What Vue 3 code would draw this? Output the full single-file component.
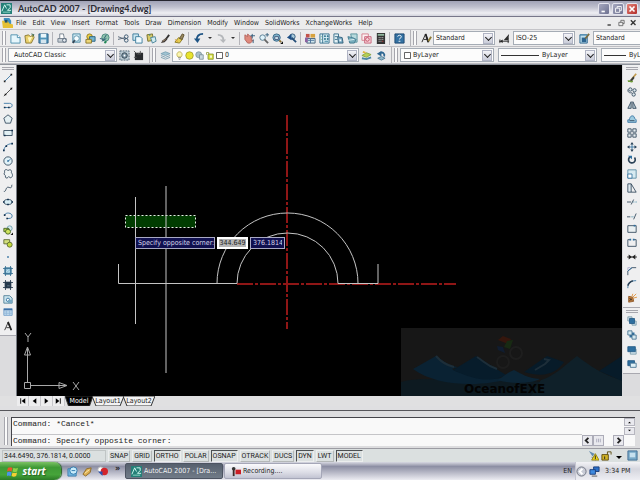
<script setup>
import { ref } from 'vue'

const blue = '#2f6f9f'
const ink = '#2b4257'

const glyphs = {
  fresh: '<path d="M1 2h7l3 3v6H1z" fill="#e6f6fc" stroke="#4d8fae"/><path d="M8 2v3h3" fill="#fff" stroke="#4d8fae"/>',
  open: '<path d="M1 3l4-1 2 2 3-2 1 3-3 6H2z" fill="#e8cf6a" stroke="#8a7a34"/><path d="M4 5l5-1-3 6z" fill="#fff7c4"/><path d="M8 1l3 1-2 2" fill="none" stroke="#3b6b54"/>',
  save: '<path d="M1 1h10v10H1z" fill="#4f94b9" stroke="#2c5f85"/><path d="M3 1h6v4H3z" fill="#e9f6fb"/><path d="M3 7h6v4H3z" fill="#d4e5ee"/>',
  print: '<path d="M3 6V1h4l1 5" fill="#fff" stroke="#74808c"/><path d="M1 6h9v4H1z" fill="#c8d0d7" stroke="#74808c"/><circle cx="8" cy="8" r="2" fill="#e4eaf0" stroke="#56677a"/>',
  preview: '<path d="M2 1h8v9H2z" fill="#d5eef5" stroke="#4685a2"/><circle cx="6" cy="6" r="3" fill="#f6fdff" stroke="#5f93ad"/><path d="M4 8l-2 3" stroke="#345" stroke-width="2"/>',
  publish: '<circle cx="5" cy="4" r="3" fill="#e9cd47" stroke="#957b1c"/><path d="M5 4h6v5H5z" fill="#75b5d0" stroke="#27607f"/><path d="M1 7h6v4H1z" fill="#ecd678" stroke="#8b772a"/>',
  globe: '<circle cx="7" cy="5" r="4" fill="#8fc4ae" stroke="#4d8a80"/><path d="M1 6l4 1 3-5M3 9l5-3" stroke="#28596f" fill="none"/><path d="M6 11l2-2" stroke="#285" stroke-width="2"/>',
  cut: '<path d="M0 4l8 3M0 7l8-2" stroke="#567"/><circle cx="9" cy="4" r="2" fill="none" stroke="#37546d"/><circle cx="9" cy="8" r="2" fill="none" stroke="#37546d"/>',
  copy: '<path d="M1 1h6v7H1z" fill="#c9e6f0" stroke="#3c7d9d"/><path d="M4 4h5l2 2v5H4z" fill="#f0fbff" stroke="#3c7d9d"/>',
  paste: '<path d="M1 2l6-1 1 7-6 1z" fill="#d8cb68" stroke="#77702c"/><path d="M5 5l5-1 1 5-4 2z" fill="#cfebef" stroke="#498299"/><circle cx="4" cy="2" r="1" fill="#587"/>',
  brush: '<path d="M10 2L7 6" stroke="#333" stroke-width="2"/><path d="M7 5L3 8l-2 3 4-1 3-3z" fill="#3c3533"/><path d="M3 9l3-2" stroke="#b09a77"/>',
  block: '<path d="M1 10l4-5 4 2-3 4z" fill="#e5cd53" stroke="#8d7b24"/><path d="M6 6l3-5 2 1-2 5z" fill="#9b8a61" stroke="#5d502e"/><path d="M1 7l3 2" stroke="#d99b30"/>',
  undo: '<path d="M11 1C6 1 4 4 4 8" fill="none" stroke="#1e5484" stroke-width="2"/><path d="M1 6h7l-3 5z" fill="#1e5484"/>',
  redo: '<path d="M2 2c4 0 6 2 6 6" fill="none" stroke="#b5b8bb" stroke-width="2"/><path d="M4 7h7l-3 4z" fill="#b5b8bb"/>',
  pan: '<path d="M1 2l3 2V1l3 3 1-1v5l2 0-3 3H4L1 7z" fill="#df8a7d" stroke="#b3655c"/><path d="M9 1v5M7 3h5M10 7v4" stroke="#315c7c"/>',
  zoomrt: '<circle cx="5" cy="5" r="3" fill="#e0f3fa" stroke="#567b91"/><path d="M7 7l4 4" stroke="#666" stroke-width="2"/><path d="M8 2h4M10 0v4" stroke="#37627f"/>',
  zoomwin: '<circle cx="5" cy="5" r="4" fill="#7fb2cb" stroke="#386685"/><path d="M3 4h4v3H3z" fill="#d9eff7" stroke="#457"/><path d="M8 8l2 2" stroke="#8b7033" stroke-width="2"/><path d="M9 12h3V9z" fill="#111"/>',
  zoomprev: '<circle cx="7" cy="4" r="3" fill="#a9cbdc" stroke="#30597a"/><path d="M6 5l5 5" stroke="#244d77" stroke-width="2"/><path d="M1 5l5-4v7z" fill="#1e4f86"/>',
  props: '<path d="M1 1h4v4H1z" fill="#c25249"/><path d="M6 1h5v4H6z" fill="#d7a23d"/><path d="M2 6h9v5H2z" fill="#d2e8ef" stroke="#45617a"/><path d="M3 8h7M6 6v5" stroke="#4c729a"/><path d="M0 5h3v5H0z" fill="#8b61a1"/>',
  design: '<path d="M1 1h10v10H1z" fill="#dcf0f6" stroke="#36718f"/><path d="M4 1v10" stroke="#36718f"/><path d="M6 3h1v1H6zM9 3h1v1H9zM6 6h1v1H6zM9 6h1v1H9zM6 9h4" stroke="#2f7d99"/><path d="M2 4h1M2 7h1" stroke="#7a7"/>',
  palette: '<path d="M1 1h5v10H1z" fill="#e2f1f5" stroke="#386d8a"/><path d="M2 4h3M2 7h3" stroke="#386d8a"/><path d="M5 4l5 1 1 6H6z" fill="#7bacc6" stroke="#31607c"/><path d="M7 7h2v2H7z" fill="#fff"/>',
  sheets: '<path d="M4 1h7v9H6z" fill="#b7dadd" stroke="#57929c"/><path d="M1 4l5 1 4 2-2 4H3z" fill="#78aebd" stroke="#437b8f"/><path d="M1 8l7-1" stroke="#e4f4f4"/>',
  markup: '<path d="M1 1h7v7H1z" fill="#fbeff0" stroke="#d4808f"/><path d="M4 4h7v7H4z" fill="#f6d4da" stroke="#c7627a"/><circle cx="7" cy="7" r="2" fill="none" stroke="#c44a62"/>',
  calc: '<path d="M2 0h9v12H2z" fill="#333"/><path d="M3 1h7v2H3z" fill="#8eb59c"/><path d="M4 5h1M6 5h1M8 5h1M4 7h1M6 7h1M8 7h1M4 9h1M6 9h1" stroke="#ddd"/><path d="M8 9h1" stroke="#e44"/>',
  help: '<path d="M1 1h10v10H1z" fill="#3472a3" stroke="#1c4770"/><path d="M4 4c0-2 4-2 4 0 0 2-2 1-2 3" fill="none" stroke="#fff" stroke-width="1"/><path d="M5 9h2" stroke="#fff"/>',
  textstyle: '<path d="M1 10L5 1l3 9M3 7h4" fill="none" stroke="#222" stroke-width="1"/><path d="M5 1l3 9" stroke="#222" stroke-width="2"/><path d="M11 4L8 9" stroke="#8d7a35" stroke-width="2"/>',
  dimstyle: '<path d="M0 9h11M1 7v4M10 5v6" stroke="#333"/><path d="M11 1L5 8l5 0z" fill="#2c2c2c"/><path d="M1 9l3-2v4z" fill="#222"/>',
  tablestyle: '<path d="M1 2h8v9H1z" fill="#bfe0ee" stroke="#2b648c"/><path d="M3 5h5v5H3z" fill="#2d6590"/><path d="M11 1L7 6" stroke="#7c6e42" stroke-width="2"/><path d="M1 2h8" stroke="#4b8db5"/>',
  gear: '<path d="M1 1h10v10H1z" fill="#bcccd5" stroke="#4f6473" stroke-dasharray="2 1"/><circle cx="6" cy="6" r="3" fill="#7f98a8" stroke="#30414e"/><circle cx="6" cy="6" r="1" fill="#fff"/>',
  workspace: '<path d="M2 3h9v8H2z" fill="#292b2e"/><path d="M1 1l3 3M8 1v4M1 8h3" stroke="#555"/><path d="M4 5l2-2 2 2" fill="#555"/>',
  layers: '<path d="M1 4l5-2 5 2-5 2z" fill="#9fc3d2" stroke="#7da3b6"/><path d="M1 6l5 2 5-2M1 8l5 2 5-2" fill="none" stroke="#7b9fb1"/>',
  bulb: '<path d="M4 8C1 5 3 1 6 1s5 4 2 7z" fill="#fbf6ae" stroke="#b2a446"/><path d="M4 9h4M5 11h2" stroke="#777"/>',
  sun: '<circle cx="6" cy="6" r="5" fill="#e8e32e" stroke="#9c982a"/>',
  vpfreeze: '<circle cx="5" cy="5" r="4" fill="#a9bfc9" stroke="#79909b"/><path d="M6 5h5v6H6z" fill="#cbd9df" stroke="#718893"/>',
  lock: '<path d="M2 5V2h3v3" fill="none" stroke="#8b9333"/><path d="M4 4h7v7H4z" fill="#d9e33d" stroke="#7f8829"/><path d="M7 6h2v3H7z" fill="#fff"/>',
  swatch: '<path d="M2 2h8v8H2z" fill="#fff" stroke="#333"/>',
  laymake: '<path d="M1 6l5-3 5 2-5 3z" fill="#b6cf52" stroke="#8aa447"/><path d="M1 9l5 1 5-2" fill="none" stroke="#4b86a3" stroke-width="2"/><path d="M2 2l3 1" stroke="#e3b63a" stroke-width="2"/>',
  layprev: '<path d="M5 4c3-3 6 0 5 3" fill="none" stroke="#2f6792" stroke-width="2"/><path d="M2 4l5-3v6z" fill="#2f6792"/><path d="M3 9l4-2 4 2-4 2z" fill="#8fb6c9" stroke="#527f98"/>',

  line: `<path d="M2 10L10 2" stroke="${blue}"/><path d="M1 10h2M9 2h2" stroke="#222" stroke-width="2"/>`,
  xline: '<path d="M1 11L11 1" stroke="#333"/><path d="M2 9h2M9 2h2" stroke="#111" stroke-width="2"/>',
  pline: `<path d="M1 4h7c4 0 4 5 0 5H2" fill="none" stroke="${blue}"/><path d="M1 9h2M6 9h2" stroke="#14324f" stroke-width="2"/>`,
  polygon: `<path d="M6 1l5 4-2 6H3L1 5z" fill="#e5f0f3" stroke="${ink}"/>`,
  rect: `<path d="M1 3h10v6H1z" fill="#e2f0f4" stroke="${ink}"/><path d="M1 9h2M10 3h2" stroke="#14324f" stroke-width="2"/>`,
  arc: `<path d="M1 11C1 6 5 2 11 2" fill="none" stroke="${blue}"/><path d="M0 10h2M3 5h2M10 2h2" stroke="#14324f" stroke-width="2"/>`,
  circle: `<circle cx="6" cy="6" r="5" fill="#e1f2f8" stroke="${ink}"/><path d="M6 6l3-2" stroke="${blue}"/><path d="M5 6h2" stroke="${blue}" stroke-width="2"/>`,
  cloud: `<path d="M2 4c-1-4 3-4 4-2 2-2 5-1 4 2 1 2 2 3 1 5-1 2-3 2-4 0-2 3-5 2-4-1-2-1-2-3-1-4z" fill="#eff3f4" stroke="${ink}"/>`,
  spline: `<path d="M1 10c3 1 2-5 5-5 2 0 3 2 4 0 1-1 0-3 1-3" fill="none" stroke="${ink}"/>`,
  ellipse: `<ellipse cx="6" cy="6" rx="5" ry="3" fill="#d8edf5" stroke="${ink}"/><path d="M0 6h2M10 6h2M5 3h2M5 9h2" stroke="#14324f" stroke-width="2"/>`,
  earc: `<path d="M2 5c1-4 9-3 9 1 0 3-3 3-6 3" fill="none" stroke="${blue}"/><path d="M4 9h2M1 5h2" stroke="#14324f" stroke-width="2"/>`,
  insert: '<circle cx="8" cy="4" r="3" fill="#d9edf2" stroke="#6b9aa8"/><path d="M1 4h6v4H1z" fill="#b8d44a" stroke="#3f5a20"/><circle cx="6" cy="8" r="3" fill="#cfe45e" stroke="#3f5a20"/><path d="M9 12h3V9z" fill="#111"/>',
  makeblock: '<path d="M1 2h7v5H1z" fill="#d2df7c" stroke="#56612f"/><circle cx="8" cy="8" r="3" fill="#c3da3d" stroke="#56612f"/>',
  point: `<path d="M5 6h2" stroke="${blue}" stroke-width="2"/>`,
  hatch: '<path d="M2 2h8v8H2z" fill="#8fc1d8" stroke="#4f87a5"/><path d="M0 3h12M0 9h12M3 0v12M9 0v12" stroke="#386f91"/><path d="M4 7l3-3M6 8l2-2" stroke="#d4ebf4"/>',
  gradient: '<path d="M2 2h8v8H2z" fill="#25394c"/><path d="M0 3h12M0 9h12M3 0v12M9 0v12" stroke="#25394c"/><path d="M5 7h3" stroke="#6a8092"/>',
  region: '<path d="M1 2h7l3 3v6H1z" fill="#c9e3ed" stroke="#497991"/><circle cx="6" cy="7" r="2" fill="#fff" stroke="#2f6f9f"/><path d="M6 7h5v4H6z" fill="#76a8c2"/>',
  table: '<path d="M1 2h10v8H1z" fill="#cfe5f3" stroke="#6d9bc8"/><path d="M1 3h10" stroke="#3d6fa5" stroke-width="2"/><path d="M4 4v6M8 4v6M1 6h10M1 8h10" stroke="#8fb6d8"/>',
  mtext: '<path d="M2 11L6 2l4 9M4 8h4" fill="none" stroke="#222" stroke-width="1"/><path d="M6 1l4 10" stroke="#222" stroke-width="2"/>',

  erase: '<path d="M11 1L6 7" stroke="#c29a4c" stroke-width="2"/><path d="M8 4L3 9l3 1 3-4z" fill="#3d3d38"/><path d="M1 10c2-1 3 1 6 0" fill="none" stroke="#6d9a37" stroke-width="2"/>',
  copyobj: `<circle cx="4" cy="3" r="2" fill="#dde8ed" stroke="${ink}"/><circle cx="9" cy="4" r="2" fill="#dde8ed" stroke="${ink}"/><circle cx="8" cy="9" r="2" fill="#dde8ed" stroke="${ink}"/><path d="M1 3c0 4 2 4 5 4" fill="none" stroke="${ink}"/>`,
  mirror: `<path d="M5 2v8H1zM7 2v8h4z" fill="#b5c6d0" stroke="${ink}"/>`,
  offset: `<path d="M1 10V7h2c0-6 6-6 6-2l2 2v3z" fill="#9fcbe0" stroke="${blue}"/><path d="M3 8h6" stroke="${ink}"/>`,
  array: `<path d="M1 1h4v4H1zM7 1h4v4H7zM1 7h4v4H1zM7 7h4v4H7z" fill="#e6edf0" stroke="${ink}"/>`,
  move: `<path d="M6 2v8M2 6h8" stroke="${blue}" stroke-width="1"/><path d="M6 0l2 3H4zM6 12l2-3H4zM0 6l3-2v4zM12 6L9 4v4z" fill="${ink}"/>`,
  rotate: `<path d="M4 2a4 4 0 1 0 5 1" fill="none" stroke="${ink}" stroke-width="2"/><path d="M1 1h5v4z" fill="${blue}"/>`,
  scale: `<path d="M1 1h10v10H1z" fill="#d7eaf1" stroke="#52869f"/><path d="M1 6h5v5H1z" fill="#fff" stroke="${blue}"/>`,
  stretch: `<path d="M1 1h4v10H1z" fill="#dfeaf0" stroke="${ink}"/><path d="M5 1l6 10H5" fill="none" stroke="${ink}"/>`,
  trim: `<path d="M0 6h5" stroke="${ink}"/><path d="M7 6h5" stroke="#6fa5bb" stroke-dasharray="2 1"/><path d="M5 9l3-6" stroke="${ink}"/>`,
  extend: `<path d="M0 7h4" stroke="${ink}"/><path d="M5 7h3" stroke="#6fa5bb"/><path d="M8 10l3-7" stroke="${ink}"/>`,
  breakpt: `<path d="M1 2h10v8H1z" fill="#eaf0f2" stroke="${ink}"/><path d="M8 2h2" stroke="${blue}" stroke-width="2"/>`,
  breaks: `<path d="M4 2H1v8h10V2H8" fill="none" stroke="${ink}"/><path d="M3 2h2M7 2h2" stroke="${blue}" stroke-width="2"/>`,
  join: '<path d="M0 6h12" stroke="#222"/><path d="M2 3l4 3-4 3zM10 3L6 6l4 3z" fill="#222"/>',
  chamfer: `<path d="M1 11V6l5-4h5" fill="none" stroke="${ink}"/><path d="M1 6l5-4" stroke="${blue}"/><path d="M1 2h3M1 2v3" stroke="#aac"/>`,
  fillet: `<path d="M1 11C1 5 4 2 11 2" fill="none" stroke="${blue}" stroke-width="1"/><path d="M1 8C2 4 4 3 7 2" fill="none" stroke="${ink}" stroke-width="2"/>`,
  explode: '<path d="M2 4l5 1 1 5-6 1z" fill="#c7803c" stroke="#8c5525"/><path d="M7 5l4-4M8 6l4-1M6 4l1-3" stroke="#e08b2d"/><path d="M3 6l3 3M3 9l3-2" stroke="#2d2a29"/>',
  front: `<path d="M1 1h5v5H1zM6 6h5v5H6z" fill="#cbdde6" stroke="#7c9baa"/><path d="M3 3h6v6H3z" fill="${blue}" stroke="#245a85"/>`,
  back: `<path d="M3 3h6v6H3z" fill="${blue}"/><path d="M1 1h5v5H1zM6 6h5v5H6z" fill="#d5e8ef" stroke="#416e8d"/>`,
  above: `<path d="M4 5h7v6H4z" fill="#cfe1ea" stroke="#7c9baa"/><path d="M1 2h9v6H1z" fill="${blue}" stroke="#245a85"/>`,
  under: `<path d="M1 2h8v6H1z" fill="${blue}" stroke="#245a85"/><path d="M4 5h7v5H4z" fill="#dff1f7" stroke="#416e8d"/>`,

  acad: '<path d="M0 0h12v12H0z" fill="#257f78"/><path d="M1 9l3-7 2 4M6 2h4v3L7 8h4" fill="none" stroke="#d8fff6"/><path d="M2 10h8" stroke="#8fd8c8"/>',
  dwg: '<path d="M2 0h6l2 3v6H2z" fill="#3f8fc0"/><path d="M0 3h6l2 3 4 1v4H1z" fill="#e6c034"/><path d="M3 2h3v3H3z" fill="#1e506f"/>',
  browser: '<path d="M1 3h9v8H1z" fill="#6fb3dc" stroke="#3f7fae"/><circle cx="7" cy="5" r="4" fill="#c9ecfb" stroke="#2d78ad"/><path d="M5 5h4" stroke="#2d78ad"/>',
  media: '<path d="M1 9l4-6 5-1-1 5-5 4z" fill="#dcae52" stroke="#8c6a2c"/><path d="M3 8l5-4" stroke="#fff0ba"/>',
  player: '<circle cx="4" cy="4" r="3" fill="#fff" stroke="#bbb"/><circle cx="8" cy="6" r="4" fill="#d3242b"/><path d="M1 6h5v5z" fill="#2b50ad"/>',
  record: '<circle cx="4" cy="3" r="2" fill="#333"/><path d="M3 4h2v7H3z" fill="#3b2a26"/><path d="M6 4h6v5H6z" fill="#cb1d24"/>',
  comm: '<path d="M1 1l6 3-2 3z" fill="#638bb0"/><path d="M4 8l4 3" stroke="#456"/><path d="M8 4l4 7H4z" fill="#f3d91d" stroke="#917f12"/><path d="M8 6v4" stroke="#222"/>',
  unlock: '<path d="M1 5h7v6H1z" fill="#d3b526" stroke="#5e4f11"/><path d="M7 5V2h4v3" fill="none" stroke="#5e4f11"/><path d="M4 7v3" stroke="#222"/>',
  screen: '<path d="M1 1h10v10H1z" fill="#78a9c7" stroke="#3f6f94"/><path d="M3 3h6v5H3z" fill="#c6e1ef"/>',
  net: '<path d="M5 1h6v5H5z" fill="#2c6fc6" stroke="#1c3f7c"/><path d="M1 4h6v5H1z" fill="#3f8be0" stroke="#1c3f7c"/><path d="M3 11h6" stroke="#555"/>'
}

const menus = ['File', 'Edit', 'View', 'Insert', 'Format', 'Tools', 'Draw', 'Dimension', 'Modify', 'Window', 'SolidWorks', 'XchangeWorks', 'Help']

const standardBar = [
  'fresh', 'open', 'save', '|', 'print', 'preview', 'publish', 'globe', '|',
  'cut', 'copy', 'paste', 'brush', 'block', '|', 'undo', 'v', 'redo', 'v', '|',
  'pan', 'zoomrt', 'zoomwin', 'zoomprev', '|',
  'props', 'design', 'palette', 'sheets', 'markup', 'calc', '|', 'help'
]
const layerState = ['bulb', 'sun', 'vpfreeze', 'lock', 'swatch']
const drawBar = ['line', 'xline', 'pline', 'polygon', 'rect', 'arc', 'circle', 'cloud', 'spline', 'ellipse', 'earc', 'insert', 'makeblock', 'point', 'hatch', 'gradient', 'region', 'table', 'mtext']
const modifyBar = ['erase', 'copyobj', 'mirror', 'offset', 'array', 'move', 'rotate', 'scale', 'stretch', 'trim', 'extend', 'breakpt', 'breaks', 'join', 'chamfer', 'fillet', 'explode']
const orderBar = ['front', 'back', 'above', 'under']

const tabs = ['Model', 'Layout1', 'Layout2']
const activeTab = ref('Model')

const modes = ref([
  { name: 'SNAP', on: false }, { name: 'GRID', on: false }, { name: 'ORTHO', on: true },
  { name: 'POLAR', on: false }, { name: 'OSNAP', on: true }, { name: 'OTRACK', on: false },
  { name: 'DUCS', on: false }, { name: 'DYN', on: true }, { name: 'LWT', on: false }, { name: 'MODEL', on: true }
])

const cornerX = ref('344.649')
const cornerY = ref('376.1814')
const command = ref('Command: Specify opposite corner:')
</script>

<template>
  <div class="desktop">
    <header class="titlebar">
      <svg class="icon" viewBox="0 0 12 12" v-html="glyphs.acad"></svg>
      <h1>AutoCAD 2007 - [Drawing4.dwg]</h1>
      <div class="winbtns">
        <button aria-label="Minimize"><svg viewBox="0 0 12 12"><path d="M3 9h4" stroke="#fff" stroke-width="2" /></svg></button>
        <button aria-label="Restore"><svg viewBox="0 0 12 12"><path d="M5 5V3h5v5H8M3 5h5v5H3z" fill="none" stroke="#fff" /></svg></button>
        <button class="close" aria-label="Close"><svg viewBox="0 0 12 12"><path d="M3 3l6 6M9 3l-6 6" stroke="#fff" stroke-width="2" /></svg></button>
      </div>
    </header>

    <nav class="menubar">
      <svg class="icon" viewBox="0 0 12 12" v-html="glyphs.dwg"></svg>
      <button v-for="m in menus" :key="m">{{ m }}</button>
      <div class="docbtns">
        <button aria-label="Minimize drawing"><svg viewBox="0 0 12 12"><path d="M3 9h5" stroke="#333" stroke-width="2" /></svg></button>
        <button aria-label="Restore drawing"><svg viewBox="0 0 12 12"><path d="M5 5V2h5v5H8M2 5h6v5H2z" fill="none" stroke="#444" /></svg></button>
        <button aria-label="Close drawing"><svg viewBox="0 0 12 12"><path d="M2 2l7 7M9 2L2 9" stroke="#333" stroke-width="2" /></svg></button>
      </div>
    </nav>

    <div class="bars">
      <div class="bar">
        <i class="grip"></i>
        <template v-for="(t, i) in standardBar" :key="i">
          <i v-if="t === '|'" class="sep"></i>
          <button v-else-if="t === 'v'" class="more" aria-label="More"><svg viewBox="0 0 9 12"><path d="M3 5h4L5 7z" fill="#333" /></svg></button>
          <button v-else class="tool" :aria-label="t"><svg class="icon" viewBox="0 0 12 12" v-html="glyphs[t]"></svg></button>
        </template>
        <i class="edge"></i>
        <i class="grip"></i>
        <button class="tool" aria-label="Text style"><svg class="icon" viewBox="0 0 12 12" v-html="glyphs.textstyle"></svg></button>
        <span class="combo style"><select aria-label="Text style name"><option>Standard</option></select><i class="drop"></i></span>
        <button class="tool gap" aria-label="Dimension style"><svg class="icon" viewBox="0 0 12 12" v-html="glyphs.dimstyle"></svg></button>
        <span class="combo style"><select aria-label="Dimension style name"><option>ISO-25</option></select><i class="drop"></i></span>
        <button class="tool gap" aria-label="Table style"><svg class="icon" viewBox="0 0 12 12" v-html="glyphs.tablestyle"></svg></button>
        <span class="combo style"><select aria-label="Table style name"><option>Standard</option></select><i class="drop"></i></span>
      </div>
      <div class="bar">
        <i class="grip"></i>
        <span class="combo workspace"><select aria-label="Workspace"><option>AutoCAD Classic</option></select><i class="drop"></i></span>
        <button class="tool" aria-label="Workspace settings"><svg class="icon" viewBox="0 0 12 12" v-html="glyphs.gear"></svg></button>
        <button class="tool" aria-label="My workspace"><svg class="icon" viewBox="0 0 12 12" v-html="glyphs.workspace"></svg></button>
        <i class="edge"></i>
        <i class="grip"></i>
        <button class="tool" aria-label="Layer manager"><svg class="icon" viewBox="0 0 12 12" v-html="glyphs.layers"></svg></button>
        <span class="combo layer">
          <svg v-for="g in layerState" :key="g" class="state" viewBox="0 0 12 12" v-html="glyphs[g]"></svg>
          <select aria-label="Layer"><option>0</option></select><i class="drop"></i>
        </span>
        <button class="tool" aria-label="Make layer current"><svg class="icon" viewBox="0 0 12 12" v-html="glyphs.laymake"></svg></button>
        <button class="tool" aria-label="Layer previous"><svg class="icon" viewBox="0 0 12 12" v-html="glyphs.layprev"></svg></button>
        <i class="edge"></i>
        <i class="grip"></i>
        <span class="combo prop">
          <svg class="state" viewBox="0 0 12 12" v-html="glyphs.swatch"></svg>
          <select aria-label="Color"><option>ByLayer</option></select><i class="drop"></i>
        </span>
        <span class="combo prop wide"><i class="stroke"></i><select aria-label="Linetype"><option>ByLayer</option></select><i class="drop"></i></span>
        <span class="combo prop wide"><i class="stroke short"></i><select aria-label="Lineweight"><option>ByLayer</option></select><i class="drop"></i></span>
      </div>
    </div>

    <main class="work">
      <aside class="side">
        <div class="palette draw">
          <i class="hgrip"></i>
          <button v-for="t in drawBar" :key="t" :aria-label="t"><svg class="icon" viewBox="0 0 12 12" v-html="glyphs[t]"></svg></button>
        </div>
      </aside>

      <section class="canvas">
        <svg class="drawing" width="100%" height="100%">
          <path class="centre" d="M270 50V264" />
          <path class="centre" d="M220 219H439" />
          <rect x="108.500" y="150.500" width="70" height="12" fill="#003c00" stroke="#e8f0e8" stroke-dasharray="2 2" />
          <g fill="none" stroke="#c4c4c4">
            <path d="M118.500 132V259M149 121V308" />
            <path d="M101.500 199V218.500H220M321 218.500H361V199" />
            <path d="M200 218.500a70.500 70.500 0 0 1 141 0M220 218.500a50.500 50.500 0 0 1 101 0" />
          </g>
          <g fill="none" stroke="#a8a8a8">
            <path d="M7.500 317.500h6v6h-6zM10.500 317V282M14 320.500h35" />
            <path d="M10.500 282l3 8h-6zM50 320.500l-8-3v6z" />
            <path d="M8 268l3 4 3-4M11 272v5M56 317l6 8M62 317l-6 8" />
          </g>
        </svg>

        <div class="watermark">
          <svg viewBox="0 0 221 68" preserveAspectRatio="none">
            <path d="M0 54c30-8 50 3 76 0s45-3 71 1 50-1 74 0v13H0z" fill="#0d1a21" />
            <path d="M12 41L35 28c7 5 13 10 22 11l-6 2c5 4 12 3 18 6 12 5 28 2 38 4-22 7-70 9-95-10z" fill="#0a2233" />
            <path d="M52 42l23-14 30 19c-14 8-32 5-53-5z" fill="#071c2b" />
            <path d="M96 52c6-2 9-7 17-10 8 4 13 8 26 9-10 5-30 5-43 1z" fill="#0c2536" />
            <path d="M123 44l23-16 17 6c-6 9-17 17-40 10z" fill="#071b29" />
            <path d="M140 52c14-4 24-15 36-24 12 9 25 19 45 24v16h-91z" fill="#0f2029" />
            <path d="M198 43l23-15v25z" fill="#071b29" />
            <path d="M35 28c5 6 10 9 18 11M76 29c8 5 10 9 20 12M143 31l5 1-4 4-10 6" fill="none" stroke="#1d2e39" stroke-width="2" />
            <path d="M97 12l5-4 8 3-3 5z" fill="#35160d" />
            <path d="M106 13l6-1-3 9-6-2z" fill="#182a13" />
            <path d="M96 18l6 1 2 6-7-3z" fill="#101d30" />
            <circle cx="115" cy="25" r="6" fill="none" stroke="#1e1e1e" stroke-width="2" />
            <circle cx="102" cy="34" r="6" fill="none" stroke="#1d1d1d" stroke-width="2" />
          </svg>
          <span>OceanofEXE</span>
        </div>

        <div class="dyn">
          <label for="corner-x">Specify opposite corner:</label>
          <input id="corner-x" v-model="cornerX" class="focus" />
          <input v-model="cornerY" aria-label="Opposite corner Y" />
        </div>
      </section>

      <aside class="side right">
        <div class="palette modify">
          <i class="hgrip"></i>
          <button v-for="t in modifyBar" :key="t" :aria-label="t"><svg class="icon" viewBox="0 0 12 12" v-html="glyphs[t]"></svg></button>
        </div>
        <div class="palette order">
          <i class="hgrip"></i>
          <button v-for="t in orderBar" :key="t" :aria-label="t"><svg class="icon" viewBox="0 0 12 12" v-html="glyphs[t]"></svg></button>
        </div>
      </aside>
    </main>

    <div class="tabs">
      <button class="nav" aria-label="First tab"><svg viewBox="0 0 12 10"><path d="M4 2v6" stroke="#111" /><path d="M9 2v6L5 5z" /></svg></button>
      <button class="nav" aria-label="Previous tab"><svg viewBox="0 0 12 10"><path d="M8 2v6L4 5z" /></svg></button>
      <button class="nav" aria-label="Next tab"><svg viewBox="0 0 12 10"><path d="M4 2v6l4-3z" /></svg></button>
      <button class="nav" aria-label="Last tab"><svg viewBox="0 0 12 10"><path d="M3 2v6l4-3z" /><path d="M8 2v6" stroke="#111" /></svg></button>
      <button v-for="t in tabs" :key="t" class="tab" :class="{ active: t === activeTab }" @click="activeTab = t">
        <svg viewBox="0 0 32 10" preserveAspectRatio="none"><path d="M0 0l4 10h24l4-10z" /></svg>
        <span>{{ t }}</span>
      </button>
    </div>

    <section class="command">
      <i class="grip"></i>
      <div class="history">
        <output>Command: *Cancel*</output>
        <div class="vscroll">
          <button aria-label="Scroll up"><svg viewBox="0 0 12 8"><path d="M4 5h4L6 3z" /></svg></button>
          <button aria-label="Scroll down"><svg viewBox="0 0 12 8"><path d="M4 3h4L6 5z" /></svg></button>
        </div>
        <input v-model="command" aria-label="Command line" />
        <div class="hscroll">
          <button aria-label="Scroll left"><svg viewBox="0 0 10 10"><path d="M6 2L3 5l3 3" fill="none" stroke="#222" stroke-width="2" /></svg></button>
          <button class="thumb" aria-label="Scroll position"><svg viewBox="0 0 10 10"><path d="M3 3v4M5 3v4M7 3v4" stroke="#aab" /></svg></button>
          <button class="end" aria-label="Scroll right"><svg viewBox="0 0 10 10"><path d="M4 2l3 3-3 3" fill="none" stroke="#222" stroke-width="2" /></svg></button>
        </div>
      </div>
    </section>

    <div class="status">
      <span class="coords">344.6490, 376.1814, 0.0000</span>
      <button v-for="m in modes" :key="m.name" :class="{ on: m.on }" :aria-pressed="m.on" @click="m.on = !m.on">{{ m.name }}</button>
      <div class="tray">
        <svg class="icon" viewBox="0 0 12 12" v-html="glyphs.comm"></svg>
        <svg class="icon" viewBox="0 0 12 12" v-html="glyphs.unlock"></svg>
        <button class="more" aria-label="Status menu"><svg viewBox="0 0 9 12"><path d="M2 6h6L5 9z" /></svg></button>
        <button class="clean" aria-label="Clean screen"><svg class="icon" viewBox="0 0 12 12" v-html="glyphs.screen"></svg></button>
      </div>
    </div>

    <footer class="taskbar">
      <button class="start">
        <svg class="icon" viewBox="0 0 12 12"><path d="M1 2c2-1 3-1 5 0L5 6c-2-1-3-1-5 0z" fill="#e9572b" /><path d="M7 2c2 1 3 1 5 0l-1 4c-2 1-3 1-5 0z" fill="#8fd148" /><path d="M0 7c2-1 3-1 5 0l-1 4c-2-1-3-1-4 0z" fill="#4b93ea" /><path d="M6 7c2 1 3 1 5 0l-1 4c-2 1-3 1-5 0z" fill="#f6cf33" /></svg>
        <span>start</span>
      </button>
      <div class="quick">
        <button v-for="q in ['browser', 'media', 'player']" :key="q" :aria-label="q"><svg class="icon" viewBox="0 0 12 12" v-html="glyphs[q]"></svg></button>
        <b>»</b>
      </div>
      <button class="task current"><svg class="icon" viewBox="0 0 12 12" v-html="glyphs.acad"></svg>AutoCAD 2007 - [Dra...</button>
      <button class="task"><svg class="icon" viewBox="0 0 12 12" v-html="glyphs.record"></svg>Recording....</button>
      <span class="lang">EN</span>
      <div class="clock">
        <button aria-label="Show hidden icons"><svg viewBox="0 0 12 12"><circle cx="6" cy="6" r="5" fill="#c9ccd6" stroke="#6f7380" /><path d="M7 3L4 6l3 3" fill="none" stroke="#fff" stroke-width="2" /></svg></button>
        <svg class="icon" viewBox="0 0 12 12" v-html="glyphs.net"></svg>
        <time>3:34 PM</time>
      </div>
    </footer>
  </div>
</template>

<style>
body {
  background: #dcdcde;
}
</style>

<style scoped>
* {
  box-sizing: border-box;
}
.desktop {
  display: flex;
  flex-direction: column;
  height: 100vh;
  overflow: hidden;
  background: #dfdfe1;
  color: #222;
  font: 7px/10px "DejaVu Sans Condensed", "Noto Sans", sans-serif;
}
button,
input,
select {
  margin: 0;
  padding: 0;
  border: 0;
  border-radius: 0;
  background: none;
  color: inherit;
  font: inherit;
}
button {
  display: flex;
  flex: none;
  align-items: center;
  justify-content: center;
  white-space: nowrap;
}
svg {
  display: block;
}
.icon {
  flex: none;
  width: 11px;
  height: 11px;
}

.titlebar {
  display: flex;
  flex: none;
  align-items: center;
  gap: 6px;
  height: 17px;
  padding: 0 2px 0 1px;
  border-top: 1px solid #25252f;
  border-bottom: 1px solid #77778a;
  background: linear-gradient(#a0a2b6, #bfc0ce 40%, #eeeef3 80%, #d2d3dc);
}
.titlebar h1 {
  flex: 1;
  margin: 0;
  color: #2a2a33;
  font: bold 9px/14px "Lato", "Open Sans", sans-serif;
  white-space: nowrap;
}
.winbtns {
  display: flex;
  gap: 2px;
}
.winbtns button {
  width: 12px;
  height: 12px;
  border: 1px solid #e4e4ee;
  border-radius: 2px;
  background: linear-gradient(135deg, #a6a8bf, #6d7190);
}
.winbtns .close {
  background: linear-gradient(135deg, #e58277, #b22d2a);
}
.winbtns svg {
  width: 10px;
  height: 10px;
}

.menubar {
  display: flex;
  flex: none;
  align-items: center;
  gap: 6px;
  height: 12px;
  padding: 0 2px;
  background: #ececed;
}
.menubar > .icon {
  margin-right: -3px;
}
.docbtns {
  display: flex;
  gap: 3px;
  margin-left: auto;
}
.docbtns svg {
  width: 9px;
  height: 8px;
}

.bars {
  flex: none;
  border-top: 1px solid #c4c4c8;
  border-bottom: 1px solid #8f949c;
  background: #ebebec;
}
.bar {
  display: flex;
  align-items: center;
  height: 17px;
  overflow: hidden;
  border-bottom: 1px solid #bdbdc2;
}
.bar > * {
  flex: none;
}
.grip {
  width: 4px;
  height: 14px;
  margin: 0 2px;
  border: solid #a6a6ad;
  border-width: 0 1px;
  background: #fafafa;
}
.edge {
  width: 1px;
  height: 16px;
  margin-left: 4px;
  background: #b3b3b8;
}
.sep {
  width: 1px;
  height: 13px;
  margin: 0 2px;
  background: #b5b5ba;
}
.tool {
  width: 14px;
  height: 15px;
}
.more {
  width: 9px;
}
.more svg {
  width: 9px;
  height: 12px;
}
.gap {
  margin: 0 2px;
}
.combo {
  display: flex;
  align-items: center;
  height: 14px;
  padding: 0 1px 0 2px;
  border: 1px solid #a5acb5;
  background: #fcfcfc;
}
.combo select {
  flex: 1;
  min-width: 0;
  height: 12px;
  appearance: none;
}
.drop {
  display: flex;
  flex: none;
  align-items: center;
  justify-content: center;
  width: 10px;
  height: 11px;
  border: 1px solid #b0b4c4;
  background: linear-gradient(#f4f4f8, #c9ccd9);
  pointer-events: none;
}
.drop::before {
  width: 4px;
  height: 4px;
  margin-top: -2px;
  border: solid #222;
  border-width: 0 1px 1px 0;
  content: "";
  transform: rotate(45deg);
}
.style {
  width: 62px;
}
.workspace {
  width: 109px;
  padding-left: 5px;
}
.layer {
  width: 187px;
}
.state {
  flex: none;
  width: 9px;
  height: 9px;
  margin-right: 1px;
}
.prop {
  width: 94px;
  margin-right: 4px;
}
.prop.wide {
  width: 99px;
}
.stroke {
  width: 38px;
  height: 1px;
  margin-right: 3px;
  background: #333;
}
.stroke.short {
  width: 22px;
}

.work {
  display: flex;
  flex: 1;
  min-height: 0;
}
.side {
  flex: none;
  width: 17px;
  border-right: 1px solid #777b82;
  background: #dcdcde;
}
.side.right {
  width: 18px;
  padding-left: 1px;
  border: 0;
}
.palette {
  display: grid;
  grid-template-rows: 6px;
  grid-auto-rows: 1fr;
  justify-items: center;
  padding-bottom: 2px;
  border-bottom: 1px solid #a9a9b0;
  background: #efeff0;
}
.palette .icon {
  width: 10px;
  height: 10px;
}
.draw {
  height: 271px;
}
.modify {
  height: 243px;
}
.order {
  height: 66px;
}
.hgrip {
  width: 12px;
  height: 3px;
  margin-top: 2px;
  border: solid #a6a6ad;
  border-width: 1px 0;
}

.canvas {
  position: relative;
  flex: 1;
  min-width: 0;
  overflow: hidden;
  background: #000;
}
.centre {
  fill: none;
  stroke: #8f1616;
  stroke-width: 2;
  stroke-dasharray: 16 2 3 2;
}
.watermark {
  position: absolute;
  right: 0;
  bottom: 0;
  width: 221px;
  height: 68px;
  background: #171717;
}
.watermark svg {
  width: 100%;
  height: 100%;
}
.watermark span {
  position: absolute;
  bottom: 0;
  left: 63px;
  color: #030303;
  font: bold 12px/13px "DejaVu Sans", sans-serif;
}
.dyn {
  position: absolute;
  top: 172px;
  left: 118px;
  display: flex;
  gap: 2px;
}
.dyn label,
.dyn input {
  height: 12px;
  padding: 0 2px;
  border: 1px solid #a9a9c4;
  background: #10104f;
  color: #d6d6ea;
  white-space: nowrap;
}
.dyn label {
  width: 80px;
}
.dyn input {
  width: 35px;
}
.dyn .focus {
  width: 31px;
  padding: 0;
  border: 2px solid #fff;
  background: #b4b4b4;
  color: #222;
  text-align: center;
}

.tabs {
  display: flex;
  flex: none;
  height: 10px;
  padding-left: 17px;
  background: #e0e0e1;
}
.nav {
  width: 12px;
  border-right: 1px solid #c6c6ca;
  background: #ededee;
}
.nav svg {
  width: 12px;
  height: 10px;
}
.tab {
  position: relative;
  width: 32px;
  margin-right: -1px;
}
.tab.active {
  width: 28px;
}
.tab svg {
  position: absolute;
  inset: 0;
  width: 100%;
  height: 100%;
  fill: #f3f3f3;
  stroke: #333;
}
.tab.active svg {
  fill: #000;
}
.tab span {
  position: relative;
}
.tab.active span {
  color: #fff;
}

.command {
  display: flex;
  flex: none;
  height: 38px;
  margin-top: 4px;
  padding: 6px 5px 2px 0;
  border-top: 1px solid #55555a;
  background: #dddddf;
}
.command .grip {
  flex: none;
  height: 28px;
  margin: 0 3px 0 4px;
}
.history {
  display: grid;
  flex: 1;
  grid-template-columns: 1fr auto;
  grid-template-rows: 17px 12px;
  border-top: 1px solid #44444a;
  border-left: 1px solid #44444a;
  background: #f9f9f9;
  font: 8px/12px "Liberation Mono", monospace;
}
.history output {
  padding: 0 1px;
  border-bottom: 1px solid #c5c5c8;
}
.history input {
  min-width: 0;
  padding: 0 1px;
}
.vscroll {
  display: grid;
  justify-self: end;
}
.vscroll button {
  width: 11px;
  height: 8px;
  border: 1px solid #b6b6bf;
  background: #e9e9ee;
}
.vscroll svg {
  width: 10px;
  height: 7px;
}
.hscroll {
  display: flex;
  margin-right: 11px;
}
.hscroll button {
  width: 11px;
  height: 11px;
  border: 1px solid #acacb8;
  background: #e9e9ee;
}
.hscroll svg {
  width: 9px;
  height: 9px;
}
.hscroll .end {
  margin-left: 9px;
}

.status {
  display: flex;
  flex: none;
  align-items: center;
  gap: 2px;
  height: 14px;
  padding: 0 2px;
  border-top: 1px solid #9c9ca3;
  background: #dbe0e0;
  font: 7px/10px "Roboto", "Liberation Sans", sans-serif;
}
.coords {
  width: 104px;
  padding-left: 1px;
  border: 1px solid #c0c5c5;
}
.status > button {
  padding: 0 1px;
  border: 1px solid;
  border-color: #eceeee #b4b8b8 #b4b8b8 #eceeee;
}
.status > button.on {
  border-color: #4c5052 #eceeee #eceeee #4c5052;
}
.tray {
  display: flex;
  align-items: center;
  gap: 2px;
  margin-left: auto;
}
.tray .clean {
  margin-left: 2px;
}

.taskbar {
  display: flex;
  flex: none;
  height: 18px;
  background: linear-gradient(#d8d9e2, #8d8fa4 25%, #b9bac8 60%, #ececf2);
}
.start {
  gap: 4px;
  width: 61px;
  padding-right: 8px;
  border-radius: 0 7px 7px 0;
  background: linear-gradient(#7cc264, #3f9a35 30%, #46a43a 70%, #2b7a26);
  box-shadow: 1px 0 1px #245f22;
  color: #fff;
  font: italic bold 10px/16px "Open Sans", sans-serif;
  text-shadow: 1px 1px 1px #245f22;
}
.quick {
  display: flex;
  flex: none;
  align-items: center;
  gap: 4px;
  width: 64px;
  padding-left: 6px;
}
.quick b {
  margin: -6px 0 0 3px;
  font-size: 9px;
}
.task {
  justify-content: flex-start;
  gap: 2px;
  width: 98px;
  height: 16px;
  margin: 1px 1px 0 0;
  padding-left: 5px;
  border: 1px solid #a5a7b8;
  border-radius: 2px;
  background: linear-gradient(#fafafc, #dcdde6 60%, #c2c4d2);
}
.task.current {
  border-color: #4d5462;
  background: linear-gradient(#56606e, #717b88);
  color: #f0f2f5;
}
.lang {
  margin-left: auto;
  padding-right: 3px;
  line-height: 19px;
}
.clock {
  display: flex;
  flex: none;
  align-items: center;
  gap: 2px;
  width: 65px;
  border-left: 1px solid #c4c5d0;
  background: linear-gradient(#f3f3f6, #d5d6de 40%, #eeeef3);
  line-height: 16px;
}
.clock button svg {
  width: 11px;
  height: 11px;
}
.clock time {
  padding-left: 3px;
}
</style>
